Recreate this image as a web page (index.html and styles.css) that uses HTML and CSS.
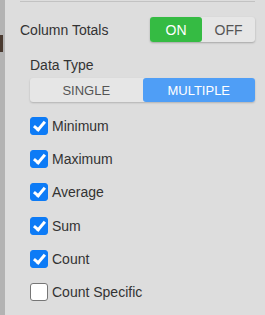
FILE: index.html
```html
<!doctype html>
<html>
    <head>
        <meta charset="utf-8">
        <title>Column Totals</title>
        <link rel="stylesheet" href="styles.css">
    </head>
    <body>
        <div id="sidebar">
            <div class="handle"></div>
        </div>
        <div id="panel">
            <div class="row-totals">
                <div class="label">Column Totals</div>
                <div class="toggle">
                    <button type="button" class="on active">ON</button>
                    <button type="button" class="off">OFF</button>
                </div>
            </div>

            <div class="sub">
                <div class="sub-title">Data Type</div>
                <div class="segmented">
                    <button type="button">SINGLE</button>
                    <button type="button" class="active">MULTIPLE</button>
                </div>

                <ul class="checks">
                    <li><span class="box checked"></span>Minimum</li>
                    <li><span class="box checked"></span>Maximum</li>
                    <li><span class="box checked"></span>Average</li>
                    <li><span class="box checked"></span>Sum</li>
                    <li><span class="box checked"></span>Count</li>
                    <li><span class="box"></span>Count Specific</li>
                </ul>
            </div>
        </div>
    </body>
</html>
```

FILE: styles.css
```css
html, body {
    margin: 0;
    padding: 0;
}
body {
    font-family: Arial, "Liberation Sans", sans-serif;
    background: #dddddd;
    color: #333;
    display: flex;
    height: 315px;
    overflow: hidden;
}
#sidebar {
    width: 5px;
    background: #b3b3b3;
    position: relative;
}
#sidebar .handle {
    position: absolute;
    left: 0;
    top: 35px;
    width: 3px;
    height: 17px;
    background: #4a3a30;
}
#panel {
    flex: 1;
    padding: 0 10px 0 15px;
}

.row-totals {
    border-top: solid 1px #c2c2c2;
    margin-top: 1px;
    padding-top: 15px;
    display: flex;
    align-items: center;
    justify-content: space-between;
}
.label {
    font-size: 14px;
}

button {
    font-family: inherit;
    border: none;
    margin: 0;
    padding: 0;
    cursor: pointer;
}

.toggle {
    display: flex;
    width: 105px;
    height: 25px;
    border-radius: 3px;
    background: #e6e6e6;
    box-shadow: 0 1px 2px rgba(0, 0, 0, .25);
}
.toggle button {
    flex: 1;
    font-size: 14px;
    background: transparent;
    color: #555;
}
.toggle button.on {
    flex: 0 0 52px;
}
.toggle button.active {
    background: #35bb43;
    color: #fff;
    border-radius: 3px;
}

.sub {
    padding-left: 10px;
}
.sub-title {
    font-size: 14px;
    margin-top: 14px;
    line-height: 18px;
}
.segmented {
    display: flex;
    height: 24px;
    margin-top: 4px;
    border-radius: 3px;
    background: #e6e6e6;
    box-shadow: 0 1px 2px rgba(0, 0, 0, .2);
}
.segmented button {
    flex: 1;
    font-size: 13px;
    background: transparent;
    color: #555;
}
.segmented button.active {
    background: #4f9ef6;
    color: #fff;
    border-radius: 3px;
}

.checks {
    list-style: none;
    margin: 15px 0 0;
    padding: 0;
}
.checks li {
    display: flex;
    align-items: center;
    height: 18px;
    margin-bottom: 15.2px;
    font-size: 14px;
    color: #333;
}
.box {
    width: 16px;
    height: 16px;
    border: solid 1px #767676;
    border-radius: 3px;
    background: #fff;
    margin-right: 4px;
    position: relative;
}
.box.checked {
    background: #0d7bf6;
    border-color: #0d7bf6;
}
.box.checked::after {
    content: "";
    position: absolute;
    left: 5px;
    top: 1px;
    width: 4px;
    height: 9px;
    border: solid #fff;
    border-width: 0 3px 3px 0;
    transform: rotate(40deg);
}
```
